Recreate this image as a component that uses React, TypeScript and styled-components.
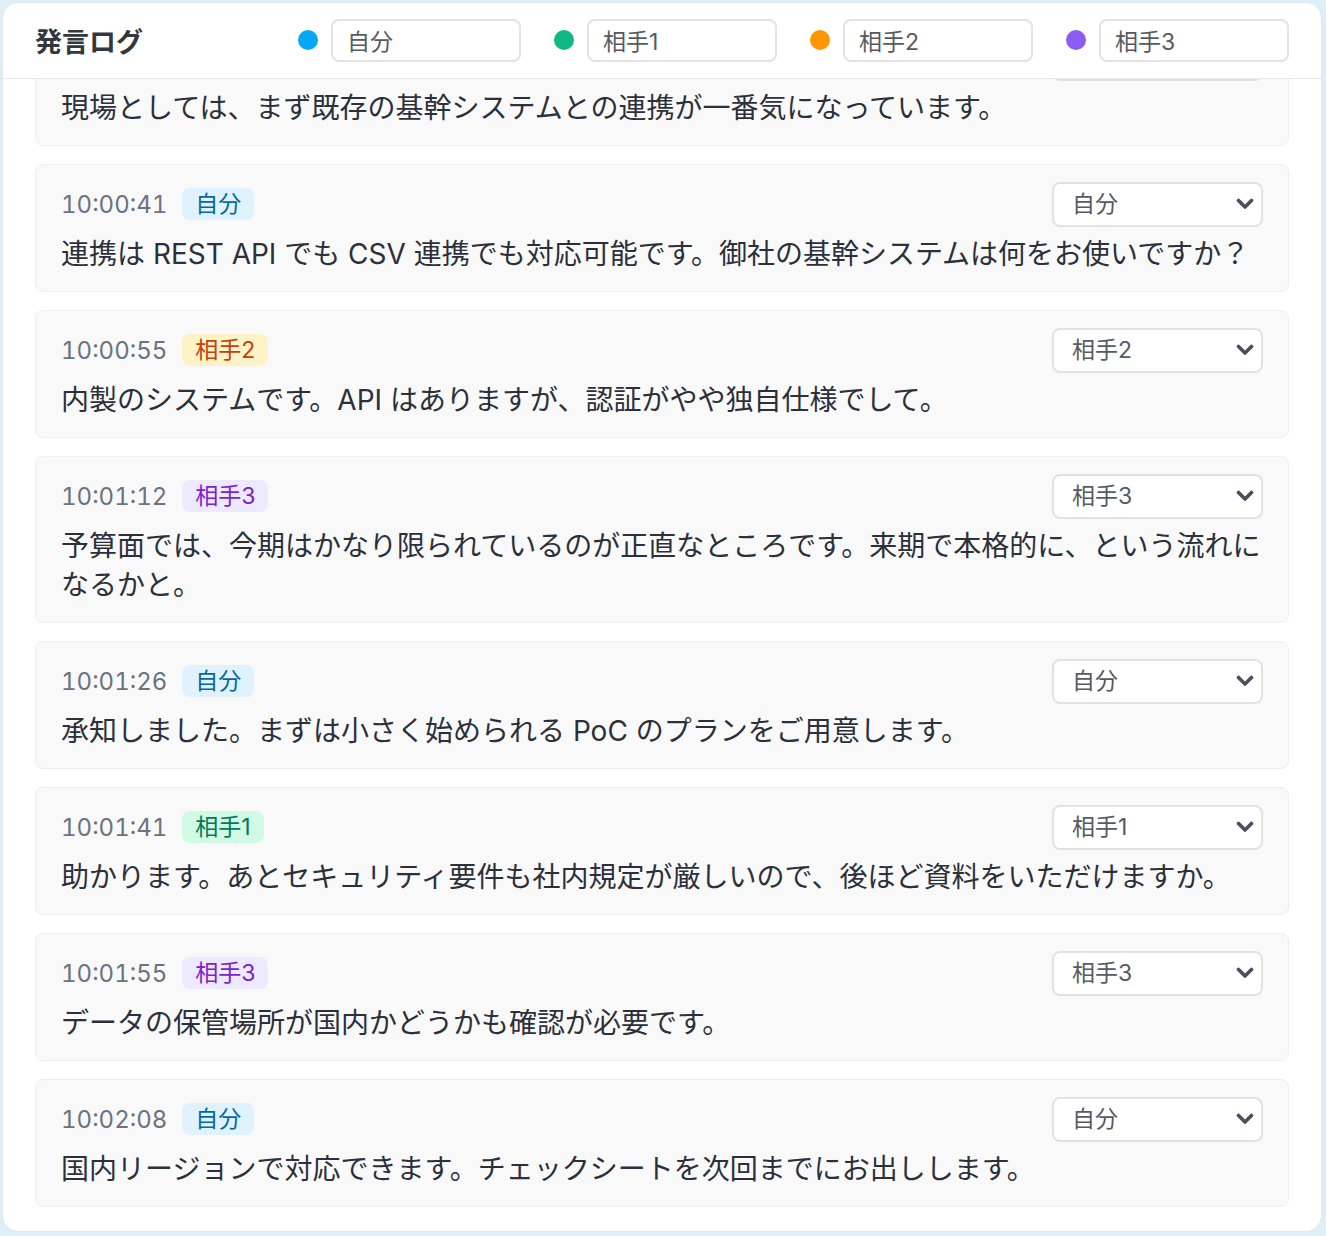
import { useLayoutEffect, useRef, useState } from "react";
import styled, { createGlobalStyle } from "styled-components";

type SpeakerId = "me" | "p1" | "p2" | "p3";

interface Message {
  id: number;
  time: string;
  speaker: SpeakerId;
  text: string;
}

const COLORS: Record<SpeakerId, { dot: string; bg: string; fg: string }> = {
  me: { dot: "#03a9f4", bg: "#e0f2fe", fg: "#0369a1" },
  p1: { dot: "#10b981", bg: "#d1fae5", fg: "#047857" },
  p2: { dot: "#ff9800", bg: "#fef3c7", fg: "#c2410c" },
  p3: { dot: "#8b5cf6", bg: "#ede9fe", fg: "#7e22ce" },
};

const ORDER: SpeakerId[] = ["me", "p1", "p2", "p3"];

const INITIAL_NAMES: Record<SpeakerId, string> = {
  me: "自分",
  p1: "相手1",
  p2: "相手2",
  p3: "相手3",
};

const INITIAL_MESSAGES: Message[] = [
  { id: 1, time: "10:00:12", speaker: "me", text: "本日はお時間いただきありがとうございます。まずは現状の課題から伺えますか？" },
  { id: 2, time: "10:00:28", speaker: "p1", text: "現場としては、まず既存の基幹システムとの連携が一番気になっています。" },
  { id: 3, time: "10:00:41", speaker: "me", text: "連携は REST API でも CSV 連携でも対応可能です。御社の基幹システムは何をお使いですか？" },
  { id: 4, time: "10:00:55", speaker: "p2", text: "内製のシステムです。API はありますが、認証がやや独自仕様でして。" },
  { id: 5, time: "10:01:12", speaker: "p3", text: "予算面では、今期はかなり限られているのが正直なところです。来期で本格的に、という流れになるかと。" },
  { id: 6, time: "10:01:26", speaker: "me", text: "承知しました。まずは小さく始められる PoC のプランをご用意します。" },
  { id: 7, time: "10:01:41", speaker: "p1", text: "助かります。あとセキュリティ要件も社内規定が厳しいので、後ほど資料をいただけますか。" },
  { id: 8, time: "10:01:55", speaker: "p3", text: "データの保管場所が国内かどうかも確認が必要です。" },
  { id: 9, time: "10:02:08", speaker: "me", text: "国内リージョンで対応できます。チェックシートを次回までにお出しします。" },
];

function Chevron() {
  return (
    <svg width="18" height="12" viewBox="0 0 18 12" fill="none">
      <path d="M2.5 2.5L9 9L15.5 2.5" stroke="#4a4f5c" strokeWidth="3.6" strokeLinecap="round" strokeLinejoin="round" />
    </svg>
  );
}

export default function App() {
  const [names, setNames] = useState(INITIAL_NAMES);
  const [messages, setMessages] = useState(INITIAL_MESSAGES);
  const listRef = useRef<HTMLDivElement>(null);

  // chat log: keep the newest message in view
  useLayoutEffect(() => {
    const el = listRef.current;
    if (el) el.scrollTop = el.scrollHeight;
  }, []);

  const setSpeaker = (id: number, speaker: SpeakerId) =>
    setMessages((prev) => prev.map((m) => (m.id === id ? { ...m, speaker } : m)));

  return (
    <>
      <GlobalStyle />
      <Panel>
        <Header>
          <Title>発言ログ</Title>
          <Legend>
            {ORDER.map((s) => (
              <LegendItem key={s}>
                <Dot $color={COLORS[s].dot} />
                <NameInput
                  value={names[s]}
                  onChange={(e) => setNames({ ...names, [s]: e.target.value })}
                />
              </LegendItem>
            ))}
          </Legend>
        </Header>
        <List ref={listRef}>
          {messages.map((m) => (
            <Card key={m.id}>
              <Meta>
                <Time>{m.time}</Time>
                <Badge $bg={COLORS[m.speaker].bg} $fg={COLORS[m.speaker].fg}>
                  {names[m.speaker]}
                </Badge>
                <SelectWrap>
                  <SpeakerSelect
                    value={m.speaker}
                    onChange={(e) => setSpeaker(m.id, e.target.value as SpeakerId)}
                  >
                    {ORDER.map((s) => (
                      <option key={s} value={s}>
                        {names[s]}
                      </option>
                    ))}
                  </SpeakerSelect>
                  <ChevronBox>
                    <Chevron />
                  </ChevronBox>
                </SelectWrap>
              </Meta>
              <Text>{m.text}</Text>
            </Card>
          ))}
        </List>
      </Panel>
    </>
  );
}

const GlobalStyle = createGlobalStyle`
  * { box-sizing: border-box; }
  html, body {
    margin: 0;
    background: #ddeef6;
  }
  body {
    padding: 2px 4px 4px 2px;
    font-family: Inter, "Noto Sans CJK JP", sans-serif;
  }
`;

const Panel = styled.div`
  display: flex;
  flex-direction: column;
  height: 1230px;
  background: #ffffff;
  border: 1px solid #e4e7eb;
  border-radius: 16px;
  overflow: hidden;
`;

const Header = styled.div`
  display: flex;
  align-items: center;
  justify-content: space-between;
  flex-shrink: 0;
  height: 76px;
  padding: 0 32px 1px;
  border-bottom: 1px solid #e6e8eb;
`;

const Title = styled.h1`
  margin: 0;
  font-size: 27px;
  font-weight: 700;
  color: #333840;
`;

const Legend = styled.div`
  display: flex;
  align-items: center;
  gap: 33px;
`;

const LegendItem = styled.div`
  display: flex;
  align-items: center;
  gap: 13px;
`;

const Dot = styled.span<{ $color: string }>`
  width: 20px;
  height: 20px;
  border-radius: 50%;
  background: ${(p) => p.$color};
`;

const NameInput = styled.input`
  width: 190px;
  height: 43px;
  padding: 0 14px;
  border: 2px solid #e3e3e3;
  border-radius: 8px;
  background: #fff;
  font: inherit;
  font-size: 23px;
  color: #555a63;
  outline: none;
`;

const List = styled.div`
  flex: 1;
  display: flex;
  flex-direction: column;
  gap: 18px;
  padding: 18px 32px 24px;
  overflow-y: auto;
  scrollbar-width: none;
`;

const Card = styled.div`
  display: flex;
  flex-direction: column;
  gap: 9px;
  flex-shrink: 0;
  padding: 17px 25px;
  background: #f9f9fa;
  border: 1px solid #eeeff1;
  border-radius: 8px;
`;

const Meta = styled.div`
  display: flex;
  align-items: center;
  gap: 15px;
  height: 44px;
`;

const Time = styled.span`
  font-size: 24px;
  font-variant-numeric: tabular-nums;
  color: #6b7280;
`;

const Badge = styled.span<{ $bg: string; $fg: string }>`
  padding: 0 13px;
  height: 32px;
  line-height: 32px;
  border-radius: 8px;
  font-size: 23px;
  background: ${(p) => p.$bg};
  color: ${(p) => p.$fg};
`;

const SelectWrap = styled.div`
  position: relative;
  margin-left: auto;
`;

const SpeakerSelect = styled.select`
  appearance: none;
  width: 211px;
  height: 45px;
  padding: 0 40px 0 18px;
  border: 2px solid #e2e2e2;
  border-radius: 8px;
  background: #fff;
  font: inherit;
  font-size: 23px;
  color: #555a63;
  outline: none;
`;

const ChevronBox = styled.span`
  position: absolute;
  right: 9px;
  top: 50%;
  transform: translateY(-50%);
  display: flex;
  pointer-events: none;
`;

const Text = styled.p`
  margin: 0;
  font-size: 28px;
  line-height: 39px;
  color: #2b303b;
`;
